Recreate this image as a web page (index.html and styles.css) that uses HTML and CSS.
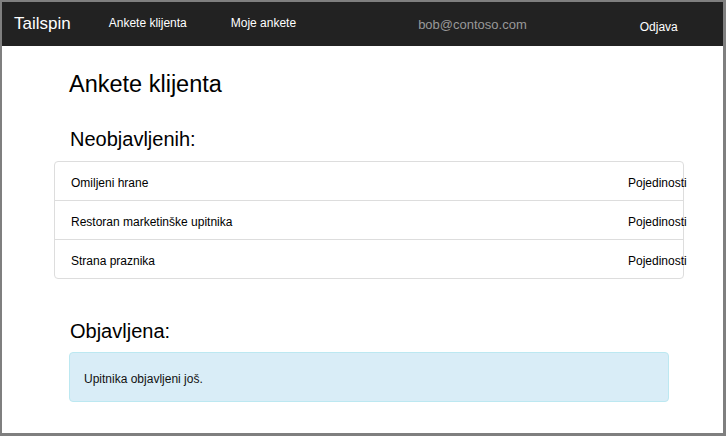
FILE: index.html
```html
<!DOCTYPE html>
<html lang="hr">
<head>
<meta charset="utf-8">
<title>Tailspin</title>
<link rel="stylesheet" href="styles.css">
</head>
<body>
<div class="frame">
  <header class="navbar">
    <span class="brand">Tailspin</span>
    <a class="nav-link first">Ankete klijenta</a>
    <a class="nav-link second">Moje ankete</a>
    <span class="user">bob@contoso.com</span>
    <a class="nav-link logout">Odjava</a>
  </header>
  <main class="container">
    <h1 class="title">Ankete klijenta</h1>
    <h2 class="section-title">Neobjavljenih:</h2>
    <ul class="list-group">
      <li class="list-item"><span class="item-name">Omiljeni hrane</span><span class="item-link">Pojedinosti</span></li>
      <li class="list-item"><span class="item-name">Restoran marketinške upitnika</span><span class="item-link">Pojedinosti</span></li>
      <li class="list-item"><span class="item-name">Strana praznika</span><span class="item-link">Pojedinosti</span></li>
    </ul>
    <h2 class="section-title published">Objavljena:</h2>
    <div class="alert">Upitnika objavljeni još.</div>
  </main>
</div>
</body>
</html>
```

FILE: styles.css
```css
* { box-sizing: border-box; }
html, body { margin: 0; padding: 0; }
body {
  font-family: "Liberation Sans", Arial, sans-serif;
  color: #111;
  background: #7f7f7f;
}
.frame {
  width: 726px;
  height: 436px;
  border-style: solid;
  border-color: #7f7f7f;
  border-width: 2px 3px 3px 2px;
  background: #fff;
  overflow: hidden;
}
.navbar {
  height: 44px;
  background: #222;
  display: flex;
  align-items: center;
  padding-left: 12px;
}
.brand {
  color: #fff;
  font-size: 17px;
  margin-top: -1px;
}
.nav-link {
  color: #fff;
  font-size: 12px;
}
.first { margin-left: 38px; margin-top: -3px; }
.second { margin-left: 44px; margin-top: -3px; }
.user {
  color: #999;
  font-size: 13px;
  margin-left: 122px;
  margin-top: 0;
}
.logout { margin-left: 113px; margin-top: 5px; }

.container {
  width: 600px;
  margin-left: 67px;
}
.title {
  font-size: 23.5px;
  font-weight: normal;
  line-height: 26px;
  margin: 25px 0 0 0;
  color: #000;
}
.section-title {
  font-size: 20px;
  font-weight: normal;
  line-height: 22px;
  margin: 31px 0 0 1px;
  color: #000;
}
.list-group {
  list-style: none;
  margin: 11px -15px 0 -15px;
  padding: 0;
  border: 1px solid #ddd;
  border-radius: 4px;
}
.list-item {
  display: flex;
  justify-content: space-between;
  font-size: 12px;
  line-height: 16px;
  padding: 13px 0 9px 16px;
  border-top: 1px solid #ddd;
}
.list-item:first-child { border-top: none; }
.item-name { color: #000; }
.item-link {
  width: 55px;
  white-space: nowrap;
  color: #000;
}
.published { margin-top: 41px; }
.alert {
  margin-top: 10px;
  background: #d9edf7;
  border: 1px solid #bce8f1;
  border-radius: 4px;
  font-size: 12px;
  line-height: 16px;
  padding: 18px 14px 14px 14px;
  color: #111;
}
```
